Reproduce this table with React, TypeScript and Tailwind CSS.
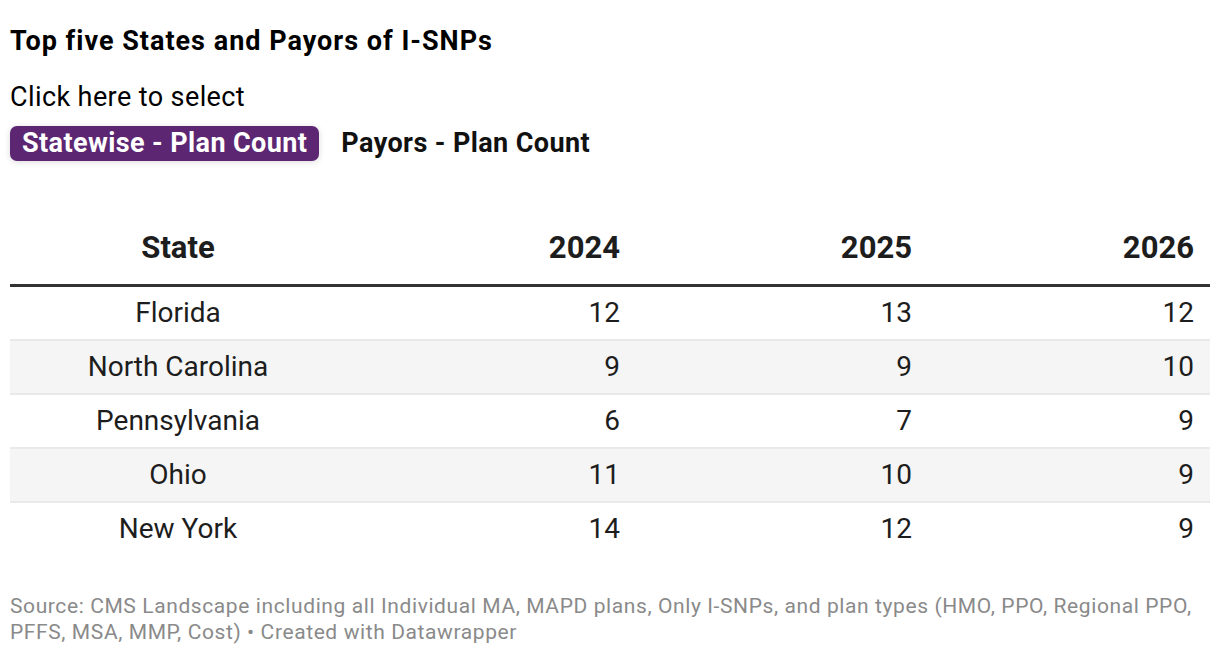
const rows = [
  { state: "Florida", y2024: 12, y2025: 13, y2026: 12 },
  { state: "North Carolina", y2024: 9, y2025: 9, y2026: 10 },
  { state: "Pennsylvania", y2024: 6, y2025: 7, y2026: 9 },
  { state: "Ohio", y2024: 11, y2025: 10, y2026: 9 },
  { state: "New York", y2024: 14, y2025: 12, y2026: 9 },
];

export default function App() {
  return (
    <div className="w-[1220px] h-[656px] bg-white px-[10px] pt-[26px] text-[#1d1d1d]" style={{ fontFamily: "Roboto, sans-serif" }}>
      <h1 className="text-[27px] leading-[30px] font-bold tracking-[1px] text-black">Top five States and Payors of I-SNPs</h1>
      <p className="mt-[26px] text-[27px] leading-[30px] tracking-[0.4px] text-black">Click here to select</p>
      <div className="mt-[11px] flex items-center gap-[22px]">
        <span className="h-[35px] px-[12px] flex items-center rounded-[7px] bg-[#5c2672] text-white text-[27px] tracking-[0.4px] font-bold shadow-[0_1px_6px_rgba(0,0,0,0.15)]">
          Statewise - Plan Count
        </span>
        <span className="text-[27px] tracking-[0.4px] font-bold text-[#111]">Payors - Plan Count</span>
      </div>
      <table className="mt-[48px] w-full border-collapse">
        <thead>
          <tr className="border-b-[3px] border-[#333]">
            <th className="w-[336px] h-[74px] text-center text-[31px] font-bold">State</th>
            <th className="w-[290px] text-right pr-[16px] text-[31px] font-bold">2024</th>
            <th className="w-[292px] text-right pr-[16px] text-[31px] font-bold">2025</th>
            <th className="text-right pr-[16px] text-[31px] font-bold">2026</th>
          </tr>
        </thead>
        <tbody>
          {rows.map((r, i) => (
            <tr key={r.state} className={`${i % 2 === 1 ? "bg-[#f5f5f5]" : "bg-white"} ${i < rows.length - 1 ? "border-b-2 border-[#e9e9e9]" : ""}`}>
              <td className="h-[54px] text-center text-[28px]">{r.state}</td>
              <td className="text-right pr-[16px] text-[28px]">{r.y2024}</td>
              <td className="text-right pr-[16px] text-[28px]">{r.y2025}</td>
              <td className="text-right pr-[16px] text-[28px]">{r.y2026}</td>
            </tr>
          ))}
        </tbody>
      </table>
      <p className="mt-[37px] text-[21px] leading-[26px] tracking-[0.6px] text-[#8a8a8a]">
        Source: CMS Landscape including all Individual MA, MAPD plans, Only I-SNPs, and plan types (HMO, PPO, Regional PPO, PFFS, MSA, MMP, Cost) • Created with Datawrapper
      </p>
    </div>
  );
}
